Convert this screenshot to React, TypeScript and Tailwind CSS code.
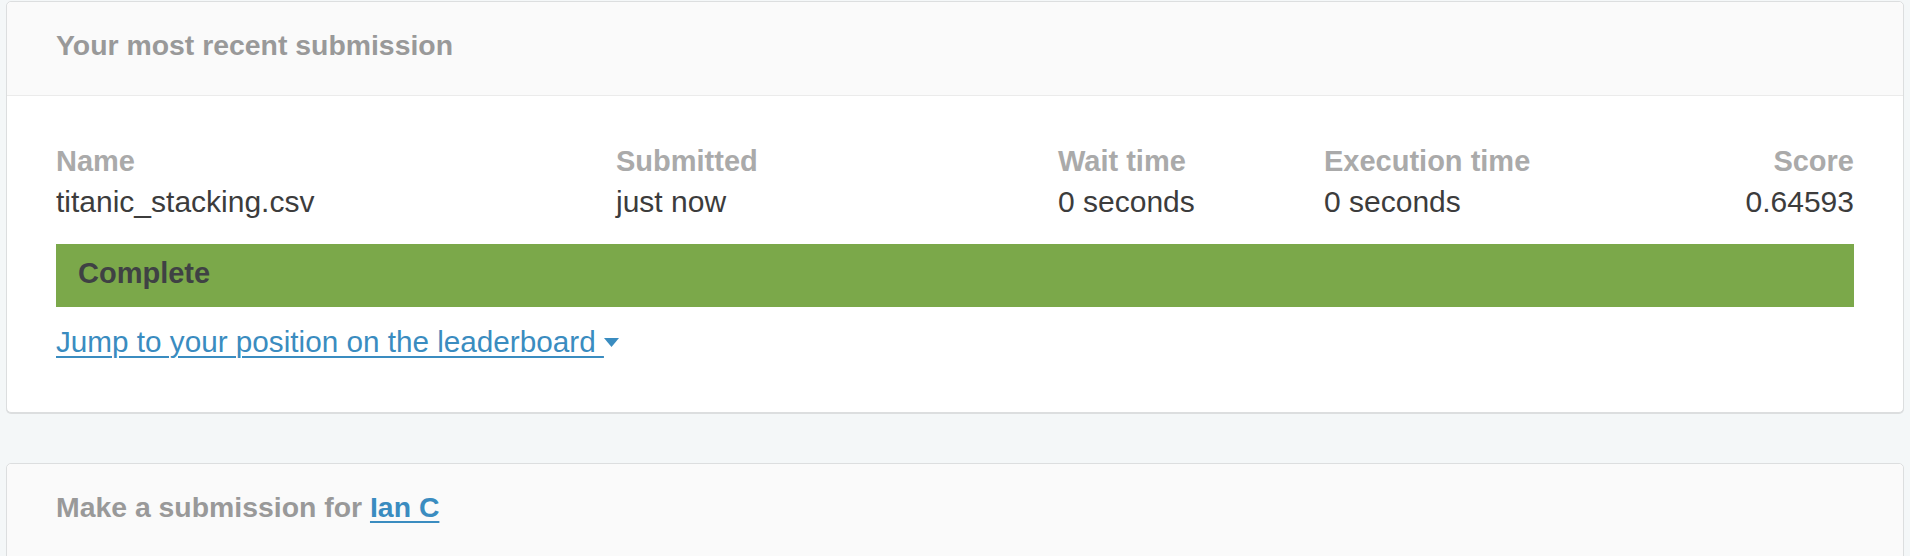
import React from 'react';

const columns = [
  { label: 'Name', value: 'titanic_stacking.csv', align: 'left' },
  { label: 'Submitted', value: 'just now', align: 'left' },
  { label: 'Wait time', value: '0 seconds', align: 'left' },
  { label: 'Execution time', value: '0 seconds', align: 'left' },
  { label: 'Score', value: '0.64593', align: 'right' },
];

const CardHeader: React.FC<{ children: React.ReactNode }> = ({ children }) => (
  <div className="bg-[#fafafa] px-[49px] pt-[27px] pb-[34px] border-b border-[#ebebeb] rounded-t-[5px]">
    <h2 className="text-[28.4px] leading-[32px] font-bold text-[#999999]">{children}</h2>
  </div>
);

const App: React.FC = () => {
  return (
    <div
      className="min-h-screen bg-[#f4f7f8] pt-[1px] px-[6px]"
      style={{ fontFamily: '"Liberation Sans", Arial, sans-serif' }}
    >
      <section className="bg-white border border-[#dcdedf] rounded-[5px] shadow-[0_1px_0_#dcdedf]">
        <CardHeader>Your most recent submission</CardHeader>

        <div className="px-[49px] pt-[48px] pb-[53px]">
          <div className="grid grid-cols-[560px_442px_266px_1fr_auto]">
            {columns.map((col) => (
              <div key={col.label} className={col.align === 'right' ? 'text-right' : 'text-left'}>
                <div className="text-[29px] leading-[35px] font-bold text-[#aaaaaa]">{col.label}</div>
                <div className="mt-[5px] text-[30px] leading-[35px] text-[#3c3c3c]">{col.value}</div>
              </div>
            ))}
          </div>

          <div className="mt-[25px] h-[63px] bg-[#7ba84a] px-[22px] pt-[12px]">
            <span className="text-[29px] leading-[35px] font-bold text-[#3f4144]">Complete</span>
          </div>

          <div className="mt-[17px] flex items-center">
            <a href="#" className="text-[29.7px] leading-[35px] text-[#3a8cc0] underline underline-offset-[4px] decoration-2">
              Jump to your position on the leaderboard&nbsp;
            </a>
            <svg width="15" height="9" viewBox="0 0 15 9" className="mt-[1px]">
              <polygon points="0,0 15,0 7.5,9" fill="#3a8cc0" />
            </svg>
          </div>
        </div>
      </section>

      <section className="mt-[50px] bg-white border border-[#dcdedf] rounded-[5px]">
        <CardHeader>
          Make a submission for{' '}
          <a href="#" className="text-[#3a8cc0] underline underline-offset-[4px] decoration-2">
            Ian C
          </a>
        </CardHeader>
        <div className="h-[200px]" />
      </section>
    </div>
  );
};

export default App;
